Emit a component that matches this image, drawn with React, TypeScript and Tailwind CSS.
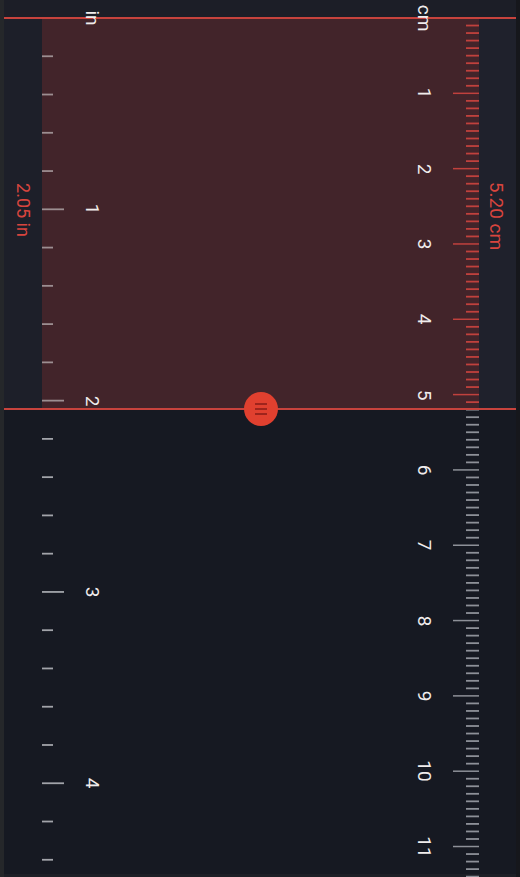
import React from 'react';

const PX_PER_CM = 75.32;
const PX_PER_IN = PX_PER_CM * 2.54;
const ZERO_Y = 18;
const SELECT_Y = 409;

const RED = '#c7433d';

function Label({ x, y, children, className }: { x: number; y: number; children: React.ReactNode; className: string }) {
  return (
    <span
      className={`absolute whitespace-nowrap leading-none -translate-x-1/2 -translate-y-1/2 rotate-90 ${className}`}
      style={{ left: x, top: y }}
    >
      {children}
    </span>
  );
}

function Ticks() {
  const cm: React.ReactNode[] = [];
  for (let i = 1; ZERO_Y + i * (PX_PER_CM / 10) < 880; i++) {
    const y = ZERO_Y + i * (PX_PER_CM / 10);
    const major = i % 10 === 0;
    const inSel = y < SELECT_Y;
    cm.push(
      <line
        key={`cm${i}`}
        x1={major ? 453 : 466}
        x2={479}
        y1={y}
        y2={y}
        stroke={inSel ? '#c0413d' : '#8d9098'}
        strokeWidth={major ? 1.5 : 1.8}
      />
    );
  }

  const inch: React.ReactNode[] = [];
  for (let i = 1; ZERO_Y + i * (PX_PER_IN / 5) < 880; i++) {
    const y = ZERO_Y + i * (PX_PER_IN / 5);
    const major = i % 5 === 0;
    const inSel = y < SELECT_Y;
    inch.push(
      <line
        key={`in${i}`}
        x1={42}
        x2={major ? 64 : 53}
        y1={y}
        y2={y}
        stroke={inSel ? '#9c8e91' : '#a2a4aa'}
        strokeWidth={1.8}
      />
    );
  }

  return (
    <svg className="absolute inset-0" width={520} height={877} viewBox="0 0 520 877">
      {cm}
      {inch}
      <line x1={4} x2={516} y1={ZERO_Y} y2={ZERO_Y} stroke={RED} strokeWidth={2} />
      <line x1={4} x2={516} y1={SELECT_Y} y2={SELECT_Y} stroke={RED} strokeWidth={2} />
    </svg>
  );
}

export default function App() {
  const cmNums = Array.from({ length: 11 }, (_, i) => i + 1);
  const inNums = [1, 2, 3, 4];

  return (
    <div className="relative w-[520px] h-[877px] flex overflow-hidden bg-[#15171c] font-['Roboto',sans-serif]">
      <div className="w-[4px] bg-[#25272a]" />
      <div className="w-[512px] flex flex-col">
        <div className="h-[18px] bg-[#1c1e27]" />
        <div className="h-[391px] flex">
          <div className="w-[38px] bg-[#1d1f29]" />
          <div className="flex-1 bg-[#42242a]" />
          <div className="w-[37px] bg-[#1f212c]" />
        </div>
        <div className="flex-1 bg-[#161922]" />
        <div className="h-[3px] bg-[#1d1f26]" />
      </div>
      <div className="w-[4px] bg-[#16171c]" />

      <Ticks />

      {/* unit labels */}
      <Label x={92} y={ZERO_Y} className="text-[19px] text-[#f0ecec]">in</Label>
      <Label x={424} y={ZERO_Y} className="text-[19px] text-[#f0ecec]">cm</Label>

      {inNums.map((n) => (
        <Label key={`i${n}`} x={92} y={ZERO_Y + n * PX_PER_IN} className="text-[19px] text-[#f0ecec]">
          {n}
        </Label>
      ))}
      {cmNums.map((n) => (
        <Label key={`c${n}`} x={424} y={ZERO_Y + n * PX_PER_CM} className="text-[19px] text-[#f0ecec]">
          {n}
        </Label>
      ))}

      {/* measured values */}
      <Label x={23} y={210} className="text-[18px] text-[#d8453e]">2.05 in</Label>
      <Label x={496} y={216} className="text-[19px] text-[#d8453e]">5.20 cm</Label>

      {/* drag handle */}
      <div className="absolute left-[244px] top-[392px] w-[34px] h-[34px] rounded-full bg-[#e0402f] flex flex-col items-center justify-center gap-[3px]">
        <span className="block w-[12px] h-[2px] bg-[#9e241c]" />
        <span className="block w-[12px] h-[2px] bg-[#9e241c]" />
        <span className="block w-[12px] h-[2px] bg-[#9e241c]" />
      </div>
    </div>
  );
}
